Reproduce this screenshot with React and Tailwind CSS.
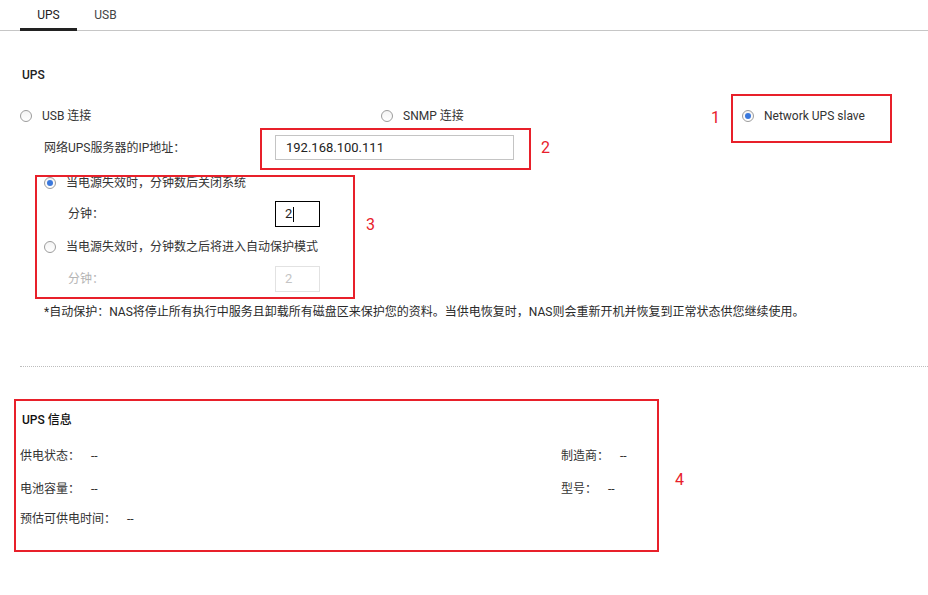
import React from "react";

const font = { fontFamily: '"Roboto", "Noto Sans CJK SC", sans-serif' };

function Radio({ checked }) {
  return (
    <span className="relative inline-flex h-[12px] w-[12px] shrink-0 items-center justify-center rounded-full border border-[#9c9c9c] bg-gradient-to-b from-[#f4f4f4] to-white">
      {checked && <span className="h-[6px] w-[6px] rounded-full bg-[#3a78dc]" />}
    </span>
  );
}

function Box({ className }) {
  return <div className={"pointer-events-none absolute border-2 border-[#e8202a] " + className} />;
}

function Num({ className, children }) {
  return (
    <div className={"pointer-events-none absolute text-[16px] leading-4 text-[#e8202a] " + className}>
      {children}
    </div>
  );
}

export default function App() {
  return (
    <div className="relative h-[595px] w-[928px] overflow-hidden bg-white text-[12px] text-[#333]" style={font}>
      {/* Tabs */}
      <div className="flex h-[31px] border-b border-[#c6c6c6] pl-5">
        <div className="relative flex h-full w-[57px] items-center justify-center text-[#222]">
          UPS
          <span className="absolute bottom-[-1px] left-0 right-0 h-[3px] bg-[#222]" />
        </div>
        <div className="flex h-full w-[57px] items-center justify-center text-[#444]">USB</div>
      </div>

      <div className="pl-5">
        <div className="mt-[36px] flex h-4 items-center pl-[2px] font-medium text-[#222]">UPS</div>

        <div className="mt-[24px] grid h-4 grid-cols-[361px_361px_1fr] items-center">
          <div className="flex items-center gap-[10px]">
            <Radio />
            <span>USB 连接</span>
          </div>
          <div className="flex items-center gap-[10px]">
            <Radio />
            <span>SNMP 连接</span>
          </div>
          <div className="flex items-center gap-[10px]">
            <Radio checked />
            <span>Network UPS slave</span>
          </div>
        </div>

        <div className="mt-[12px] flex h-[25px] items-center pl-6">
          <span className="w-[231px]">网络UPS服务器的IP地址：</span>
          <div className="flex h-[25px] w-[239px] items-center border border-[#c4c4c4] px-[10px] text-[13px] text-[#222]">
            192.168.100.111
          </div>
        </div>

        <div className="mt-[15px] flex h-4 items-center gap-[10px] pl-6">
          <Radio checked />
          <span>当电源失效时，分钟数后关闭系统</span>
        </div>

        <div className="mt-[10px] flex h-[26px] items-center pl-12">
          <span className="w-[207px]">分钟：</span>
          <div className="flex h-[26px] w-[45px] items-center border border-black pl-[9px] text-[13px] text-[#222]">
            2<span className="ml-[1px] inline-block h-[15px] w-px bg-black" />
          </div>
        </div>

        <div className="mt-[12px] flex h-4 items-center gap-[10px] pl-6">
          <Radio />
          <span>当电源失效时，分钟数之后将进入自动保护模式</span>
        </div>

        <div className="mt-[11px] flex h-[26px] items-center pl-12">
          <span className="w-[207px] text-[#b4b4b4]">分钟：</span>
          <div className="flex h-[26px] w-[45px] items-center border border-[#e2e2e2] pl-[9px] text-[13px] text-[#c4c4c4]">
            2
          </div>
        </div>

        <div className="mt-[12px] flex h-4 items-center pl-6 text-[#2a2a2a]">
          *自动保护：NAS将停止所有执行中服务且卸载所有磁盘区来保护您的资料。当供电恢复时，NAS则会重新开机并恢复到正常状态供您继续使用。
        </div>

        <div className="mt-[46px] border-t border-dotted border-[#bdbdbd]" />

        <div className="mt-[45px] flex h-4 items-center pl-[2px] font-medium text-[#111]">UPS 信息</div>

        <div className="mt-[19px] grid h-4 grid-cols-[541px_1fr] items-center">
          <div className="flex gap-[11px]">
            <span>供电状态：</span>
            <span>--</span>
          </div>
          <div className="flex gap-[11px]">
            <span>制造商：</span>
            <span>--</span>
          </div>
        </div>
        <div className="mt-[17px] grid h-4 grid-cols-[541px_1fr] items-center">
          <div className="flex gap-[11px]">
            <span>电池容量：</span>
            <span>--</span>
          </div>
          <div className="flex gap-[11px]">
            <span>型号：</span>
            <span>--</span>
          </div>
        </div>
        <div className="mt-[15px] flex h-4 items-center gap-[11px]">
          <span>预估可供电时间：</span>
          <span>--</span>
        </div>
      </div>

      {/* Annotations */}
      <Box className="left-[731px] top-[94px] h-[49px] w-[161px]" />
      <Num className="left-[711px] top-[110px]">1</Num>
      <Box className="left-[260px] top-[128px] h-[42px] w-[271px]" />
      <Num className="left-[541px] top-[140px]">2</Num>
      <Box className="left-[35px] top-[175px] h-[124px] w-[320px]" />
      <Num className="left-[366px] top-[217px]">3</Num>
      <Box className="left-[14px] top-[399px] h-[153px] w-[645px]" />
      <Num className="left-[675px] top-[472px]">4</Num>
    </div>
  );
}
